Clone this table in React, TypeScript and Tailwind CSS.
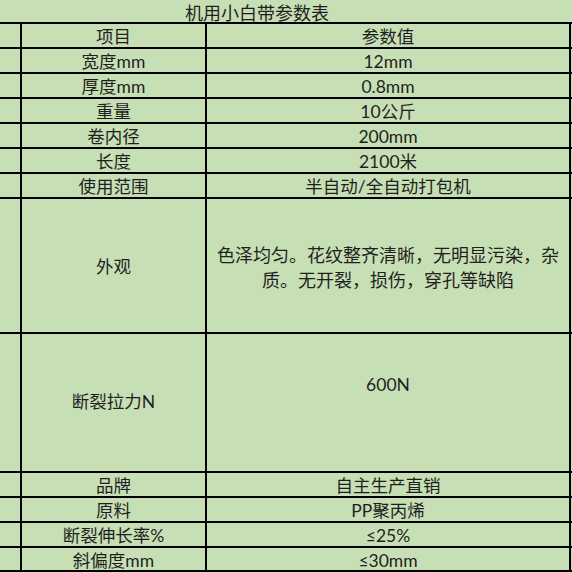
const rows: { label: string; value: string }[] = [
  { label: '项目', value: '参数值' },
  { label: '宽度mm', value: '12mm' },
  { label: '厚度mm', value: '0.8mm' },
  { label: '重量', value: '10公斤' },
  { label: '卷内径', value: '200mm' },
  { label: '长度', value: '2100米' },
  { label: '使用范围', value: '半自动/全自动打包机' },
];

const tail: { label: string; value: string }[] = [
  { label: '品牌', value: '自主生产直销' },
  { label: '原料', value: 'PP聚丙烯' },
  { label: '断裂伸长率%', value: '≤25%' },
];

function Row({ label, value, last }: { label: string; value: string; last?: boolean }) {
  return (
    <div
      className={`grid grid-cols-[20px_185px_366px] border-b-2 border-black ${
        last ? 'h-[24px]' : 'h-[25px]'
      }`}
    >
      <div />
      <div className="flex items-center justify-center border-l-2 border-black pt-[3px] leading-[20px]">
        {label}
      </div>
      <div className="flex items-center justify-center border-x-2 border-black pt-[3px] leading-[20px]">
        {value}
      </div>
    </div>
  );
}

export default function App() {
  return (
    <div
      className="h-[572px] w-[572px] overflow-hidden bg-[#c7dfb4] text-[17.5px] text-[#1f1f1f]"
      style={{ fontFamily: 'Lato, "Noto Sans CJK SC", sans-serif' }}
    >
      <div className="flex h-[22px] w-[514px] justify-center pt-[3px] text-[18px] leading-[20px]">
        机用小白带参数表
      </div>

      <div className="border-t-2 border-black">
        {rows.map((r) => (
          <Row key={r.label} label={r.label} value={r.value} />
        ))}

        <div className="grid h-[135px] grid-cols-[20px_185px_366px] border-b-2 border-black">
          <div />
          <div className="flex items-center justify-center border-l-2 border-black pt-[4px]">
            外观
          </div>
          <div className="flex flex-col items-center justify-center border-x-2 border-black pt-[4px] text-[18px] leading-[25px]">
            <span className="block">色泽均匀。花纹整齐清晰，无明显污染，杂</span>
            <span className="block">质。无开裂，损伤，穿孔等缺陷</span>
          </div>
        </div>

        <div className="grid h-[139px] grid-cols-[20px_185px_366px] border-b-2 border-black">
          <div />
          <div className="flex items-center justify-center border-l-2 border-black">
            断裂拉力N
          </div>
          <div className="flex justify-center border-x-2 border-black pt-[39px] leading-[24px]">
            600N
          </div>
        </div>

        {tail.map((r) => (
          <Row key={r.label} label={r.label} value={r.value} />
        ))}
        <Row label="斜偏度mm" value="≤30mm" last />
      </div>
    </div>
  );
}
